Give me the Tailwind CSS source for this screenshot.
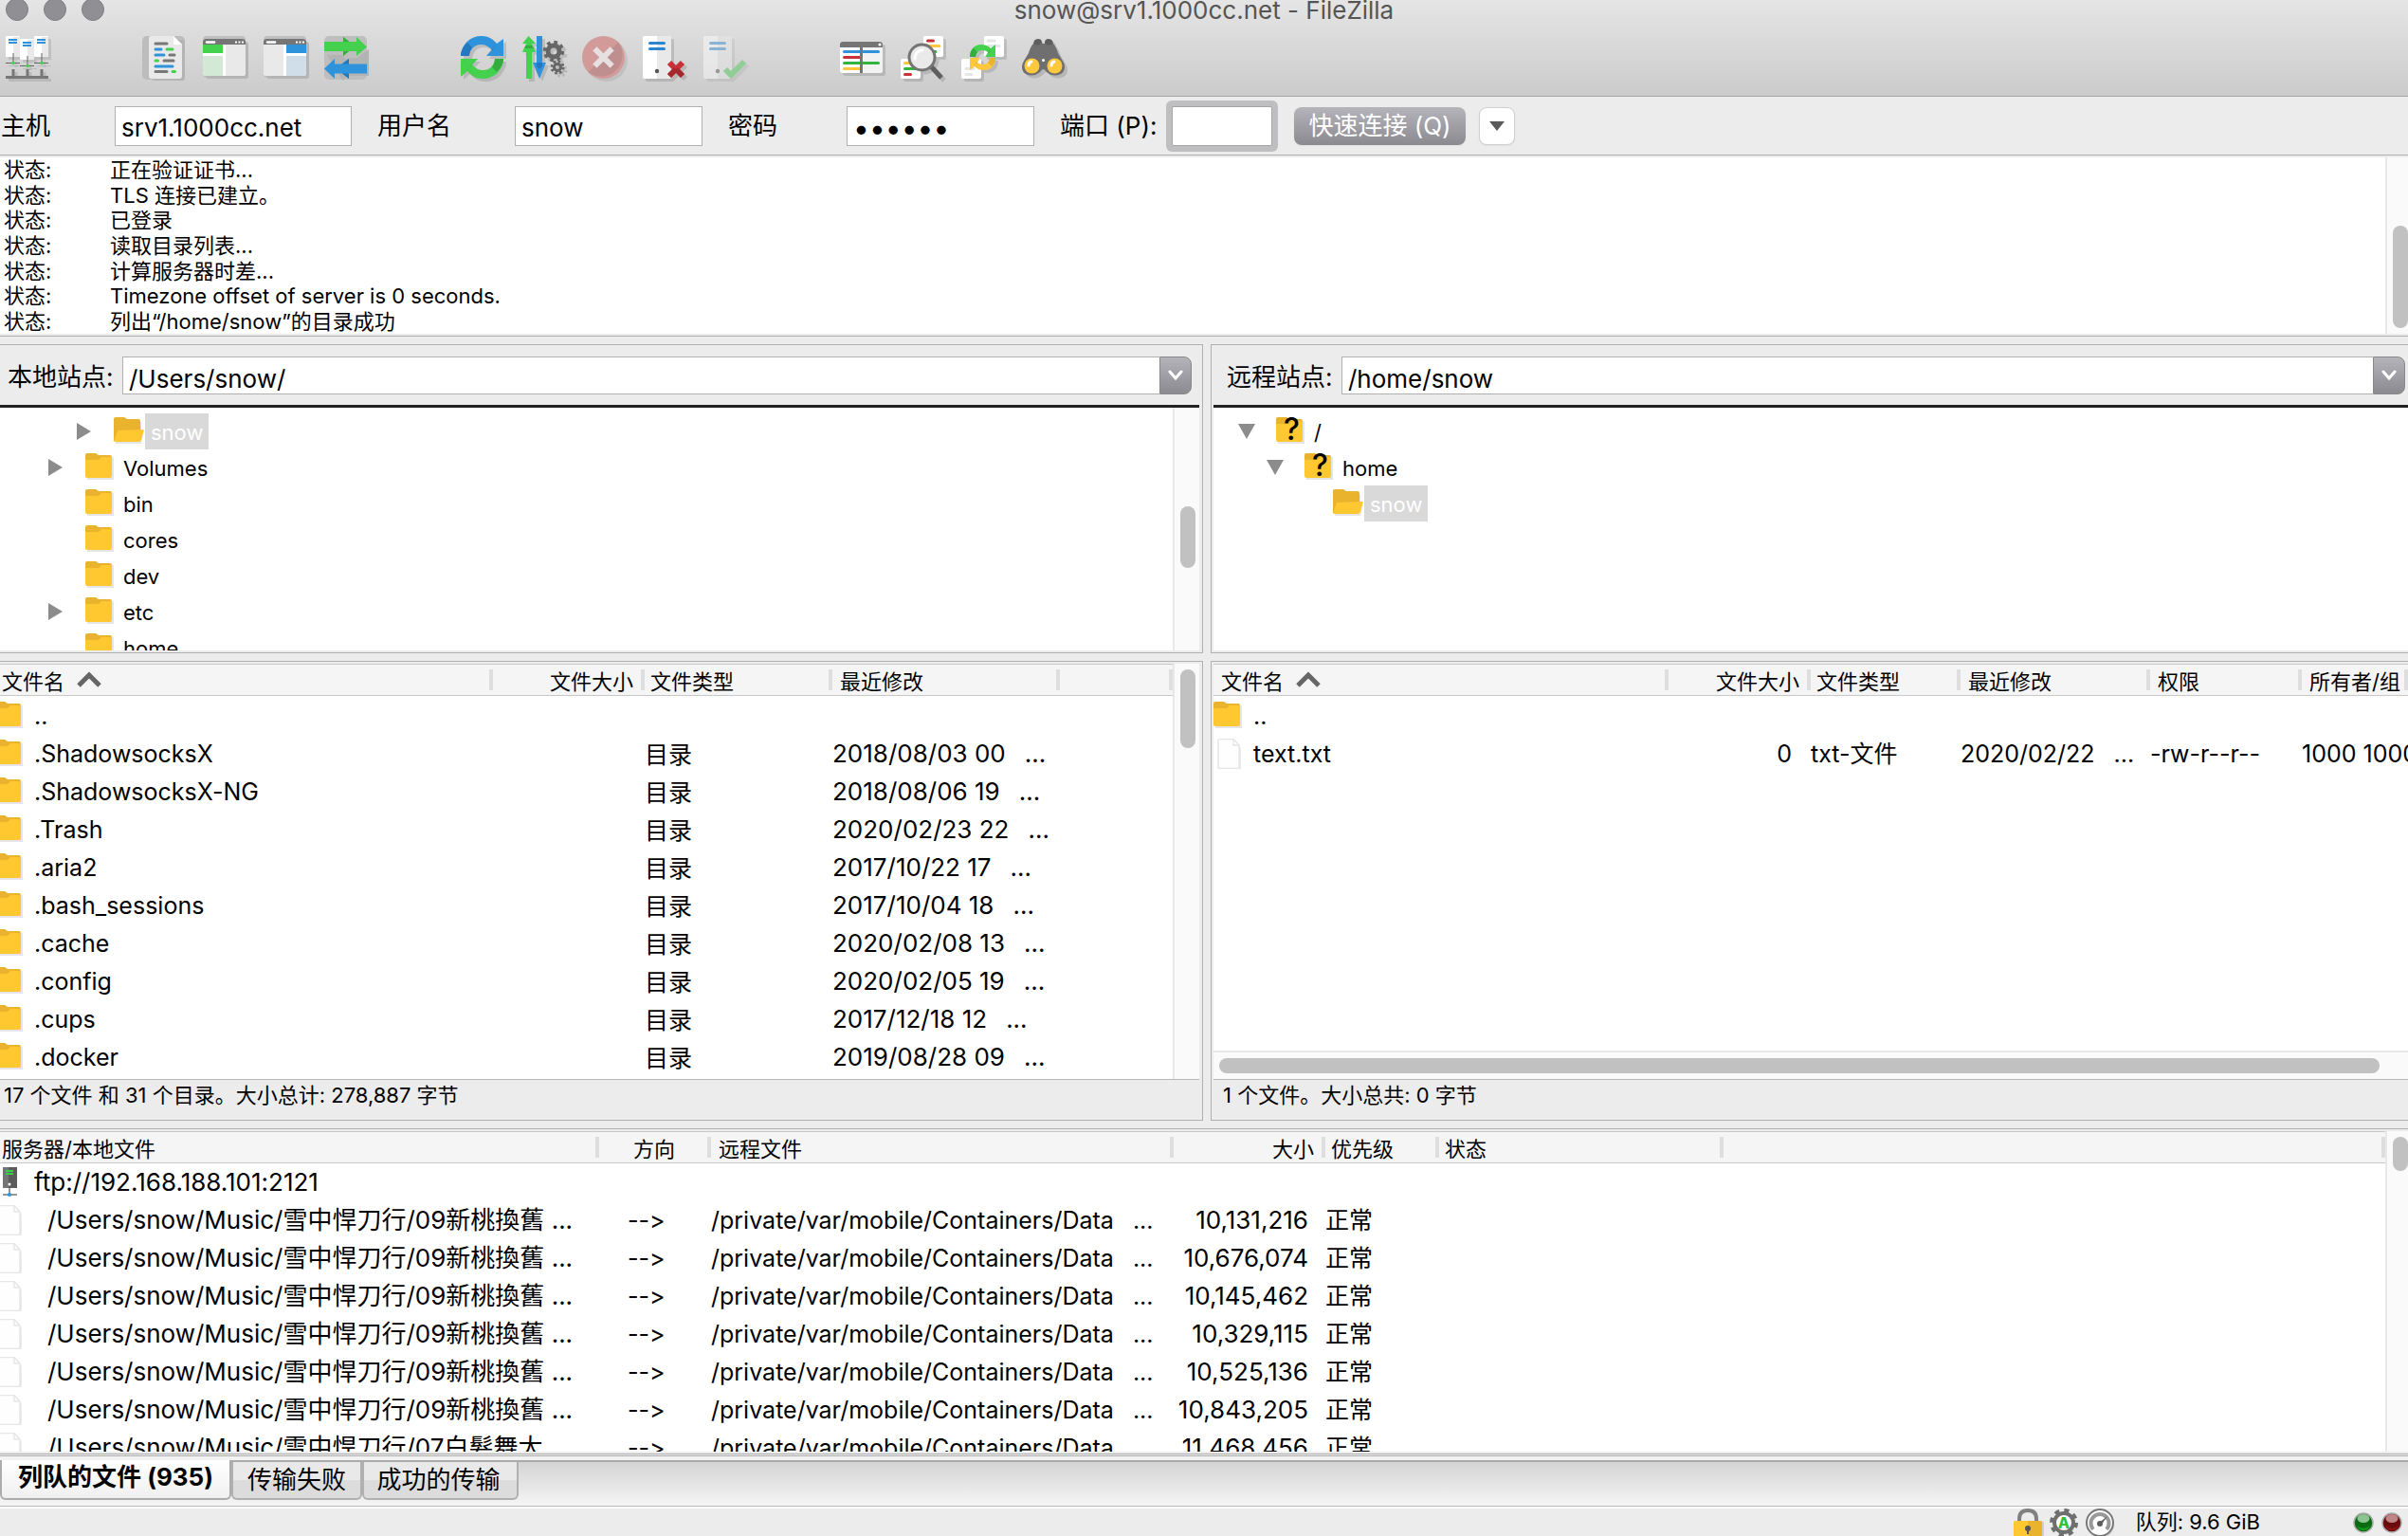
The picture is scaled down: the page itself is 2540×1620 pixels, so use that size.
<!DOCTYPE html>
<html lang="zh-CN">
<head>
    <meta charset="UTF-8" />
    <meta name="viewport" content="width=device-width, initial-scale=1.0" />
    <title>snow@srv1.1000cc.net - FileZilla</title>
    <script src="https://cdn.jsdelivr.net/npm/@tailwindcss/browser@4"></script>
</head>
<body class="flex h-screen flex-col overflow-hidden bg-[#ececec] font-['Inter','Noto_Sans_CJK_SC',sans-serif] [font-feature-settings:'calt'_0] text-[25px] leading-10 whitespace-nowrap text-black">

<!-- Shared icons -->
<svg class="hidden">
    <symbol id="folder" viewBox="0 0 32 32">
        <path d="M1 5h28l1 1v23H2z" fill="#000" opacity=".1"/>
        <path d="M0 3q0-2 2-2h9l3 2h12q2 0 2 2v18H0z" fill="#e9b32d"/>
        <path d="M0 8h14l3-3h10q1 0 1 1v19q0 2-2 2H2q-2 0-2-2z" fill="#ffc730"/>
    </symbol>
    <symbol id="folder-open" viewBox="0 0 32 32">
        <path d="M2 6h27v9h3l-3 14H2z" fill="#000" opacity=".1"/>
        <path d="M0 3q0-2 2-2h9l3 2h12q2 0 2 2v21H0z" fill="#e9b32d"/>
        <path d="M4 15l27-1q1 0 0 3l-2 8q-1 2-3 2H1q-1 0 0-3z" fill="#ffc730"/>
    </symbol>
    <symbol id="file" viewBox="0 0 32 32">
        <path d="M8 3h15l6 7v21q0 3-2 3H8z" fill="#000" opacity=".08"/>
        <path d="M5 2q0-1.500 1.500-1.500H21l6 6.500v23q0 1.500-1.500 1.500h-19Q5 31.500 5 30z" fill="#fefefe" stroke="#e6e6e6" stroke-width="1.500"/>
        <path d="M21 1v6h6" fill="none" stroke="#e6e6e6" stroke-width="1.500"/>
    </symbol>
    <symbol id="server" viewBox="0 0 32 32">
        <path d="M9 0h8v22H9z" fill="#757575"/><path d="M15 0h9v22h-9z" fill="#5b5b5b"/>
        <path d="M12 4h8M12 7h8" stroke="#3ad04a" stroke-width="2"/>
        <circle cx="16" cy="18" r="1.500" fill="#fff"/>
        <path d="M16 22v8M9 29h15" stroke="#777" stroke-width="1.500"/>
        <circle cx="16" cy="29" r="2" fill="#2f93e0"/>
    </symbol>
    <symbol id="refresh" viewBox="0 0 48 48">
        <path d="M0 21C1 8 10 0 22 0c7 0 12 3 16 8l7-5v18H27l6-6c-4-5-8-6-12-6-6 0-11 4-12 12z" fill="#2f93db"/>
        <path d="M0 21C0 15 3 11 7 7l5 5c-2 3-3 6-3 9zM27 21l6-6 5-7v0L27 21z" fill="#2478bf"/>
        <path d="M45 24c-1 13-10 21-22 21-7 0-12-3-16-8l-7 6V24h18l-6 6c4 5 8 6 12 6 6 0 11-4 12-12z" fill="#43d14e"/>
        <path d="M45 24c0 6-3 10-7 14l-5-5c2-3 3-6 3-9zM18 24l-6 6-5 6z" fill="#33ad3d"/>
    </symbol>
</svg>

<!-- Title bar and toolbar -->
<header class="border-b border-[#a3a3a3] bg-linear-to-b from-[#e5e5e5] to-[#cbcbcb] pb-[15px]">
    <div class="relative flex h-[38px] justify-center">
        <div class="absolute -top-[2px] left-[6px] flex gap-4">
            <button aria-label="关闭" class="size-6 rounded-full border border-[#7d7d82] bg-[#8f8f94]"></button>
            <button aria-label="最小化" class="size-6 rounded-full border border-[#7d7d82] bg-[#8f8f94]"></button>
            <button aria-label="缩放" class="size-6 rounded-full border border-[#7d7d82] bg-[#8f8f94]"></button>
        </div>
        <h1 class="text-[26px] leading-[22px] text-[#555]">snow@srv1.1000cc.net - FileZilla</h1>
    </div>
    <nav class="flex h-12 gap-24 pl-[6px]">
        <button aria-label="站点管理器"><svg class="size-12 drop-shadow-[3px_3px_0_#0000001a]" viewBox="0 0 48 48">
            <g fill="#fff"><rect width="15" height="22" rx="1"/><rect x="15" y="3" width="15" height="22" rx="1"/><rect x="30" width="15" height="22" rx="1"/></g>
            <path d="M8 1h7v21H8zM23 4h7v21h-7zM38 1h7v21h-7z" fill="#e9e9e9"/>
            <path d="M3 4h9M3 7h9M18 7h9M18 10h9M33 4h9M33 7h9" stroke="#2f93db" stroke-width="2"/>
            <path d="M8 18v10M23 21v10M38 18v10M0 28.500h15M15 31.500h15M30 28.500h15" stroke="#666" stroke-width="1"/>
            <path d="M8 35v8M23 35v8M38 35v8" stroke="#777" stroke-width="3"/><path d="M0 43.500h45" stroke="#777" stroke-width="3"/>
            <g fill="#43d14e"><circle cx="8" cy="28.500" r="1.800"/><circle cx="23" cy="31.500" r="1.800"/><circle cx="38" cy="28.500" r="1.800"/></g>
        </svg></button>
        <div class="flex gap-4">
            <button aria-label="消息日志"><svg class="size-12" viewBox="0 0 48 48">
                <rect width="45" height="46" rx="5" fill="#bcbcbc"/><rect x="10" y="4" width="35" height="43" rx="3" fill="#b4b4b4"/>
                <path d="M7 2q0-2 2-2h24l9 9v33q0 3-3 3H10q-3 0-3-3z" fill="#e9e9e9"/><path d="M33 0l9 9h-9z" fill="#fff"/>
                <g fill="none" stroke-width="3" stroke-linecap="round">
                    <path d="M14 8h12M29 20h5M23 26h10M14 37.500h12" stroke="#777"/>
                    <path d="M14 14h6M14 20h9M14 32h18" stroke="#2f93db"/>
                    <path d="M26 14h6M14 26h2.500M32 37.500h2.500" stroke="#43d14e"/>
                </g>
            </svg></button>
            <button aria-label="本地目录树"><svg class="size-12" viewBox="0 0 48 48">
                <rect width="45" height="44" rx="4" fill="#bfbfbf"/><rect x="3" y="6" width="45" height="39" rx="3" fill="#b5b5b5"/>
                <rect y="3" width="45" height="39" rx="3" fill="#fff"/><path d="M0 9V6q0-3 3-3h39q3 0 3 3v3z" fill="#757575"/>
                <path d="M4 6.500h8" stroke="#fff" stroke-width="2.500" stroke-linecap="round"/><path d="M34 6.500h2M37.500 6.500h2M41 6.500h2" stroke="#fff" stroke-width="2"/>
                <path d="M0 9h21v9H0z" fill="#43d14e"/><path d="M0 21h21v21H3q-3 0-3-3z" fill="#d3e9d5"/><path d="M24 9h21v30q0 3-3 3H24z" fill="#e9e9e9"/>
            </svg></button>
            <button aria-label="远程目录树"><svg class="size-12" viewBox="0 0 48 48">
                <rect width="45" height="44" rx="4" fill="#bfbfbf"/><rect x="3" y="6" width="45" height="39" rx="3" fill="#b5b5b5"/>
                <rect y="3" width="45" height="39" rx="3" fill="#fff"/><path d="M0 9V6q0-3 3-3h39q3 0 3 3v3z" fill="#757575"/>
                <path d="M4 6.500h8" stroke="#fff" stroke-width="2.500" stroke-linecap="round"/><path d="M34 6.500h2M37.500 6.500h2M41 6.500h2" stroke="#fff" stroke-width="2"/>
                <path d="M24 9h21v9H24z" fill="#2f93db"/><path d="M24 21h21v18q0 3-3 3H24z" fill="#d0dee9"/><path d="M0 9h21v33H3q-3 0-3-3z" fill="#e9e9e9"/>
            </svg></button>
            <button aria-label="传输队列"><svg class="size-12" viewBox="0 0 48 48">
                <rect width="45" height="46" rx="5" fill="#bebebe"/><path d="M3 20h16l3 4 13-1 12-9v28H24l-4 5-3-4z" fill="#b3b3b3"/>
                <path d="M0 6h20V1l7 5h7V1l11 10.500L34 21v-5h-8l-6 5v-5H0z" fill="#43d14e"/><path d="M20 1l6 5h-6zM20 21v-5h6z" fill="#33ad3d"/>
                <path d="M45 29.500H26V24l-8 5.500h-7V24L0 34.500 11 45v-5.500h8l7 5.500v-5.500h19z" fill="#2f93db"/><path d="M26 24v5.500h-7zM26 45v-5.500h-7z" fill="#2478bf"/>
            </svg></button>
        </div>
        <div class="flex gap-4">
            <button aria-label="刷新"><svg class="size-12 drop-shadow-[3px_3px_0_#0000001f]" viewBox="0 0 48 48"><use href="#refresh"/></svg></button>
            <button aria-label="处理队列"><svg class="size-12 drop-shadow-[3px_3px_0_#0000001f]" viewBox="0 0 48 48">
                <path d="M7.500 0L15 8h-4l4 9h-4v28H5V17H1l4-9H1z" fill="#43d14e"/><path d="M5 10h6l2 3H3z" fill="#33ad3d"/>
                <path d="M16 0h6v28h4l-7 17-7-17h4z" fill="#2f93db"/><path d="M16 28h6v4l-3 3-3-3z" fill="#2478bf"/>
                <g fill="none" stroke="#666"><circle cx="34" cy="16" r="6" stroke-width="5"/><circle cx="34" cy="16" r="9.500" stroke-width="3.500" stroke-dasharray="3.730 3.730"/>
                <circle cx="38" cy="33" r="3.500" stroke-width="3"/><circle cx="38" cy="33" r="6" stroke-width="3" stroke-dasharray="2.350 2.350"/></g>
            </svg></button>
            <button aria-label="取消当前操作" disabled><svg class="size-12 drop-shadow-[3px_3px_0_#00000014]" viewBox="0 0 48 48">
                <circle cx="22.500" cy="22.500" r="22.500" fill="#d39a9a"/><path d="M38 6.500A22.500 22.500 0 0 1 6.500 38z" fill="#bf8f8f"/>
                <path d="M15.500 15.500l14 14M29.500 15.500l-14 14" stroke="#e6e0e0" stroke-width="6" stroke-linecap="square"/>
            </svg></button>
            <button aria-label="断开连接"><svg class="size-12 drop-shadow-[3px_3px_0_#0000001f]" viewBox="0 0 48 48">
                <rect width="30" height="45" rx="2" fill="#fff"/><path d="M15 0h13q2 0 2 2v41q0 2-2 2H15z" fill="#e9e9e9"/>
                <path d="M7.500 7.500h15M7.500 13.500h15" stroke="#2a86cf" stroke-width="3" stroke-linecap="round"/><circle cx="15" cy="37" r="2.200" fill="#555"/>
                <path d="M28 28l14 14M42 28L28 42" stroke="#c63238" stroke-width="6"/><path d="M35 35l7 7M35 35l-7 7" stroke="#a3272c" stroke-width="5"/>
            </svg></button>
            <button aria-label="重新连接" disabled><svg class="size-12 opacity-45 drop-shadow-[3px_3px_0_#0000001f]" viewBox="0 0 48 48">
                <rect width="30" height="45" rx="2" fill="#fff"/><path d="M15 0h13q2 0 2 2v41q0 2-2 2H15z" fill="#e9e9e9"/>
                <path d="M7.500 7.500h15M7.500 13.500h15" stroke="#2a86cf" stroke-width="3" stroke-linecap="round"/><circle cx="15" cy="37" r="2.200" fill="#555"/>
                <path d="M23 35l6 6 14-14" fill="none" stroke="#43c950" stroke-width="6"/>
            </svg></button>
        </div>
        <div class="flex gap-4">
            <button aria-label="目录列表过滤器"><svg class="size-12 drop-shadow-[3px_3px_0_#0000001f]" viewBox="0 0 48 48">
                <rect y="6" width="45" height="33" rx="3" fill="#fff"/><path d="M25 12h20v24q0 3-3 3H25z" fill="#f2f2f2"/>
                <path d="M0 12V9q0-3 3-3h39q3 0 3 3v3z" fill="#757575"/><circle cx="42" cy="9" r="1.500" fill="#fff"/>
                <g stroke-width="3" stroke-linecap="round"><path d="M4.500 16.500h36" stroke="#2f93db"/><path d="M4.500 22.500h18" stroke="#c63238"/><path d="M4.500 28.500h36" stroke="#32b53e"/><path d="M4.500 34.500h18" stroke="#ffc73c"/></g>
                <path d="M22.500 12v27" stroke="#757575" stroke-width="3"/>
            </svg></button>
            <button aria-label="目录对比"><svg class="size-12 drop-shadow-[3px_3px_0_#0000001f]" viewBox="0 0 48 48">
                <rect x="24" width="21" height="22" rx="2" fill="#fff"/><rect y="24" width="21" height="21" rx="2" fill="#fff"/>
                <g stroke-width="3" stroke-linecap="round"><path d="M28.500 5h6M4.500 40.500h6" stroke="#c63238"/><path d="M28 10.500h13M4.500 28.500h8" stroke="#ffc73c"/><path d="M30 16.500h7M4.500 34.500h12" stroke="#32b53e"/></g>
                <path d="M32 32l11 12" stroke="#5e5e5e" stroke-width="5"/><circle cx="22.500" cy="22.500" r="13.500" fill="#eaeaea" stroke="#757575" stroke-width="3"/>
                <path d="M15 24q0-8 8-9" fill="none" stroke="#fff" stroke-width="3" stroke-linecap="round"/>
            </svg></button>
            <button aria-label="同步浏览"><svg class="size-12 drop-shadow-[3px_3px_0_#0000001f]" viewBox="0 0 48 48">
                <rect x="24" width="21" height="22" rx="2" fill="#fff"/><rect y="24" width="21" height="21" rx="2" fill="#fff"/>
                <path d="M28 5h7M28 10.500h12M5 34.500h8M5 40.500h6" stroke="#e6e6e6" stroke-width="3" stroke-linecap="round"/>
                <path d="M9 22C9 14 14 9 21 9c4 0 7 1 10 4l5-4v13H25l4-4c-2-2-4-3-7-3-4 0-7 3-7 7z" fill="#43d14e"/><path d="M9 22q0-6 4-9l4 4q-2 2-2 5zM25 22l4-4 2-5z" fill="#33ad3d"/>
                <path d="M36 23c0 8-5 13-12 13-4 0-7-1-10-4l-5 4V23h11l-4 4c2 2 4 3 7 3 4 0 7-3 7-7z" fill="#ffc73c"/><path d="M36 23q0 6-4 9l-4-4q2-2 2-5zM20 23l-4 4-2 5z" fill="#e9b32d"/>
            </svg></button>
            <button aria-label="文件搜索"><svg class="size-12 drop-shadow-[3px_3px_0_#0000001f]" viewBox="0 0 48 48">
                <path d="M12 9q0-6 5-6 4 0 4 4v5h-9zM24 12V7q0-4 4-4 5 0 5 6v3z" fill="#5e5e5e"/>
                <path d="M12 8q6 3 8 0h5q2 3 8 0 3 3 5 10l6 10q3 8-3 12-8 4-15-2-2-3-3.500-3T19 38q-7 6-15 2-6-4-3-12L7 18q2-7 5-10z" fill="#6f6f6f"/>
                <circle cx="10.500" cy="31.500" r="8" fill="#ffc73c"/><circle cx="34.500" cy="31.500" r="8" fill="#ffc73c"/><circle cx="22.500" cy="25.500" r="1.500" fill="#fff"/>
                <path d="M7 31q0-3 3-4M31 31q0-3 3-4" fill="none" stroke="#fff" stroke-width="3" stroke-linecap="round"/>
            </svg></button>
        </div>
    </nav>
</header>

<!-- Quick connect -->
<form class="flex h-[62px] items-center border-b border-[#b0b0b0] pl-px text-[26px]">
    <label for="host" class="w-[120px]">主机</label>
    <input id="host" value="srv1.1000cc.net" class="h-[42px] w-[250px] border border-[#b0b0b0] bg-white pt-1 pl-[6px] outline-none" />
    <label for="user" class="w-[172px] pl-[27px]">用户名</label>
    <input id="user" value="snow" class="h-[42px] w-[198px] border border-[#b0b0b0] bg-white pt-1 pl-[6px] outline-none" />
    <label for="pass" class="w-[152px] pl-[27px]">密码</label>
    <input id="pass" type="password" value="secret" class="h-[42px] w-[198px] border border-[#b0b0b0] bg-white pt-1 pl-[6px] text-3xl outline-none" />
    <label for="port" class="w-[145px] pl-[27px]">端口 (P):</label>
    <input id="port" class="h-[42px] w-[106px] rounded-xs border border-[#a5a5a7] bg-white pl-[6px] ring-6 ring-[#bfbfc1] outline-none" />
    <button type="button" class="ml-[23px] h-10 w-[181px] rounded-lg bg-linear-to-b from-[#b5b4ba] to-[#8b8a90] text-white shadow-xs">快速连接 (Q)</button>
    <button type="button" aria-label="历史记录" class="ml-[14px] flex h-10 w-[38px] items-center justify-center rounded-lg border border-[#cfcfcf] bg-white shadow-xs"><svg class="h-[10px] w-4" viewBox="0 0 16 10"><path d="M0 0h16L8 10z" fill="#5a5a5a"/></svg></button>
</form>

<!-- Message log -->
<section class="flex border-b border-[#b0b0b0] py-[2px]">
    <ul id="log" class="grid h-[186px] flex-1 grid-rows-7 bg-white pl-1 text-[22px]"></ul>
    <div class="w-6 border-l-2 border-[#e8e8e8] bg-[#fafafa] pt-[72px] pl-[6px]"><div class="h-[108px] w-4 rounded-full bg-[#c1c1c1]"></div></div>
</section>

<main class="mt-2 grid grid-cols-[1269fr_1263fr] gap-2">
    <!-- Local tree -->
    <section class="min-w-0 border-y border-r border-[#b0b0b0] pr-[3px] pb-[2px]">
        <div class="flex h-[63px] items-center pr-2 pb-[11px] pl-2 text-[26px]">
            <label for="localPath" class="w-[121px] pt-4">本地站点:</label>
            <input id="localPath" value="/Users/snow/" class="mt-3 h-10 min-w-0 flex-1 border border-r-0 border-[#b0b0b0] bg-white pt-2 pl-[6px] outline-none" />
            <button aria-label="本地路径列表" class="mt-3 flex h-10 w-[34px] items-center justify-center rounded-r-lg border border-[#89888e] bg-linear-to-b from-[#b5b4ba] to-[#8b8a90]"><svg class="h-3 w-4" viewBox="0 0 16 12"><path d="M2 2l6 7 6-7" fill="none" stroke="#fff" stroke-width="3" stroke-linecap="round"/></svg></button>
        </div>
        <div class="border-t-3 border-[#222]"></div>
        <div class="flex h-64 bg-white">
            <ul id="localTree" class="flex-1 overflow-hidden pt-[6px] text-[22px]"></ul>
            <div class="w-7 border-l-2 border-[#e8e8e8] bg-[#fafafa] pt-[104px] pl-[6px]"><div class="h-[65px] w-4 rounded-full bg-[#c1c1c1]"></div></div>
        </div>
    </section>

    <!-- Remote tree -->
    <section class="min-w-0 border-y border-l border-[#b0b0b0] pb-[2px] pl-[2px]">
        <div class="flex h-[63px] items-center pr-[3px] pb-[11px] pl-[14px] text-[26px]">
            <label for="remotePath" class="w-[121px] pt-4">远程站点:</label>
            <input id="remotePath" value="/home/snow" class="mt-3 h-10 min-w-0 flex-1 border border-r-0 border-[#b0b0b0] bg-white pt-2 pl-[6px] outline-none" />
            <button aria-label="远程路径列表" class="mt-3 flex h-10 w-[34px] items-center justify-center rounded-r-lg border border-[#89888e] bg-linear-to-b from-[#b5b4ba] to-[#8b8a90]"><svg class="h-3 w-4" viewBox="0 0 16 12"><path d="M2 2l6 7 6-7" fill="none" stroke="#fff" stroke-width="3" stroke-linecap="round"/></svg></button>
        </div>
        <div class="border-t-3 border-[#222]"></div>
        <ul id="remoteTree" class="h-64 overflow-hidden bg-white pt-[6px] text-[22px]"></ul>
    </section>

    <!-- Local files -->
    <section class="min-w-0 border-y border-r border-[#b0b0b0] pt-[2px] pr-[3px]">
        <div class="flex h-[438px] bg-white">
            <div class="min-w-0 flex-1 overflow-hidden">
                <table class="w-full table-fixed border-collapse">
                    <colgroup><col class="w-[520px]" /><col class="w-[160px]" /><col class="w-[198px]" /><col class="w-[240px]" /><col /></colgroup>
                    <thead id="localHead" class="border-y border-[#c8c8c8] bg-[#f5f5f5] text-[22px]"></thead>
                    <tbody id="localFiles"></tbody>
                </table>
            </div>
            <div class="w-7 border-l-2 border-[#e8e8e8] bg-[#fafafa] pt-[6px] pl-[6px]"><div class="h-[83px] w-4 rounded-full bg-[#c1c1c1]"></div></div>
        </div>
        <p class="h-[43px] border-t border-[#b8b8b8] pl-1 text-[22px] leading-8">17 个文件 和 31 个目录。大小总计: 278,887 字节</p>
    </section>

    <!-- Remote files -->
    <section class="min-w-0 border-y border-l border-[#b0b0b0] pt-[2px] pl-[2px]">
        <div class="flex h-[438px] flex-col bg-white">
            <div class="min-h-0 flex-1 overflow-hidden">
                <table class="w-full table-fixed border-collapse">
                    <colgroup><col class="w-[480px]" /><col class="w-[150px]" /><col class="w-[158px]" /><col class="w-[200px]" /><col class="w-[160px]" /><col /></colgroup>
                    <thead id="remoteHead" class="border-y border-[#c8c8c8] bg-[#f5f5f5] text-[22px]"></thead>
                    <tbody id="remoteFiles"></tbody>
                </table>
            </div>
            <div class="h-[30px] border-t-2 border-[#e8e8e8] bg-[#fafafa] pt-[6px] pr-[30px] pl-[6px]"><div class="h-4 rounded-full bg-[#c1c1c1]"></div></div>
        </div>
        <p class="h-[43px] border-t border-[#b8b8b8] pl-[10px] text-[22px] leading-8">1 个文件。大小总共: 0 字节</p>
    </section>
</main>

<!-- Transfer queue -->
<section class="mt-2 flex min-h-0 flex-1 border-y border-[#b0b0b0] py-[2px]">
    <div class="min-w-0 flex-1 overflow-hidden bg-white">
        <table class="w-full table-fixed border-collapse">
            <colgroup><col class="w-[632px]" /><col class="w-[118px]" /><col class="w-[488px]" /><col class="w-[160px]" /><col class="w-[120px]" /><col class="w-[300px]" /><col /></colgroup>
            <thead id="queueHead" class="border-y border-[#c8c8c8] bg-[#f5f5f5] text-[22px]"></thead>
            <tbody id="queue"></tbody>
        </table>
    </div>
    <div class="w-6 border-l-2 border-[#e8e8e8] bg-[#fafafa] pt-[6px] pl-[6px]"><div class="h-9 w-4 rounded-full bg-[#c1c1c1]"></div></div>
</section>

<div class="mt-px h-[5px] border-t border-[#b0b0b0] bg-[#f2f2f2]"></div>
<div class="flex h-[49px] items-start border-t-2 border-b border-t-[#aaa] border-b-[#b8b8b8] bg-linear-to-b from-[#d4d4d4] to-[#f5f5f5] text-[26px]">
    <button class="-mt-[2px] h-[42px] w-[244px] rounded-b-md border-2 border-t-0 border-[#acacac] bg-linear-to-b from-white to-[#f0f0f0] pb-1 leading-8 font-bold">列队的文件 (935)</button>
    <button class="h-10 w-[138px] rounded-b-md border-2 border-t-0 border-[#b0b0b0] bg-linear-to-b from-[#e9e9e9] from-50% to-[#dcdcdc] to-50% leading-9">传输失败</button>
    <button class="h-10 w-[165px] rounded-b-md border-2 border-t-0 border-[#b0b0b0] bg-linear-to-b from-[#e9e9e9] from-50% to-[#dcdcdc] to-50% pr-1 leading-9">成功的传输</button>
</div>

<!-- Status bar -->
<footer class="flex h-[31px] items-start justify-end overflow-hidden border-t-2 border-white pr-[6px] text-[22px]">
    <svg class="h-8 w-[34px]" viewBox="0 0 34 32"><path d="M7 14v-3q0-9 9-9t9 9v3" fill="none" stroke="#808080" stroke-width="4"/><path d="M4 14h29v18H4z" fill="#000" opacity=".12"/><path d="M1 15q0-2 2-2h26q2 0 2 2v17H1z" fill="#ffc730"/><path d="M16 13h13q2 0 2 2v17H16z" fill="#e9b32d"/><circle cx="16" cy="21" r="3" fill="#555"/><path d="M15 21h2v6h-2z" fill="#555"/></svg>
    <svg class="ml-1 size-8" viewBox="0 0 32 32"><circle cx="16" cy="15" r="10" fill="#fff" stroke="#6f6f6f" stroke-width="4"/><circle cx="16" cy="15" r="13" fill="none" stroke="#6f6f6f" stroke-width="4" stroke-dasharray="5.100 5.100"/><text x="16" y="21" text-anchor="middle" font-size="16" font-weight="800" fill="#32c03f">A</text></svg>
    <svg class="ml-[6px] size-8" viewBox="0 0 32 32"><circle cx="17" cy="17" r="14" fill="#000" opacity=".12"/><circle cx="16" cy="15" r="14" fill="#fff" stroke="#777" stroke-width="2"/><path d="M9 22a9.500 9.500 0 1 1 14 0" fill="none" stroke="#999" stroke-width="4"/><path d="M14 16l10-8-7 10z" fill="#5e5e5e"/><circle cx="16" cy="16" r="3" fill="#5e5e5e"/></svg>
    <span class="mr-[98px] ml-[22px] leading-7">队列: 9.6 GiB</span>
    <svg class="mt-1 size-[22px]" viewBox="0 0 22 22"><circle cx="11" cy="11" r="10" fill="#0b6b12" stroke="#aaa" stroke-width="1.500"/><ellipse cx="11" cy="6.500" rx="6.500" ry="4.500" fill="#8cc48f"/><path d="M4 14q7 6 14 0-2 5-7 5t-7-5z" fill="#159a1e"/></svg>
    <svg class="mt-1 ml-2 size-[22px]" viewBox="0 0 22 22"><circle cx="11" cy="11" r="10" fill="#6b0b0b" stroke="#aaa" stroke-width="1.500"/><ellipse cx="11" cy="6.500" rx="6.500" ry="4.500" fill="#bd8585"/><path d="M4 14q7 6 14 0-2 5-7 5t-7-5z" fill="#8f1515"/></svg>
</footer>

<script>
    const log = ["正在验证证书...", "TLS 连接已建立。", "已登录", "读取目录列表...", "计算服务器时差...", "Timezone offset of server is 0 seconds.", "列出“/home/snow”的目录成功"];
    document.getElementById("log").innerHTML = log.map(m => `
      <li class="flex items-center leading-6"><span class="w-28">状态:</span>${m}</li>
    `).join("");

    // Tree rows: indent class, arrow, icon, name, selected
    const right = `<svg class="mr-6 h-[18px] w-[15px]" viewBox="0 0 15 18"><path d="M0 0l15 9-15 9z" fill="#8c8c8c"/></svg>`;
    const down = `<svg class="mr-[22px] h-4 w-[18px]" viewBox="0 0 18 16"><path d="M0 0h18L9 16z" fill="#8c8c8c"/></svg>`;
    const mark = `<span class="absolute top-0 left-2 text-[32px] leading-7 font-medium">?</span>`;

    function treeRow(indent, arrow, icon, name, extra) {
      const box = extra === "selected"
        ? `<span class="ml-px bg-[#d9d9d9] px-[6px] pt-[2px] leading-9 text-white">${name}</span>`
        : `<span class="ml-2 pt-[2px] leading-9">${name}</span>`;
      return `<li class="flex h-[38px] items-center ${indent}">${arrow}<span class="relative size-8"><svg class="size-8"><use href="#${icon}"/></svg>${extra === "unknown" ? mark : ""}</span>${box}</li>`;
    }

    document.getElementById("localTree").innerHTML =
      treeRow("pl-[81px]", right, "folder-open", "snow", "selected") +
      treeRow("pl-[51px]", right, "folder", "Volumes") +
      treeRow("pl-[90px]", "", "folder", "bin") +
      treeRow("pl-[90px]", "", "folder", "cores") +
      treeRow("pl-[90px]", "", "folder", "dev") +
      treeRow("pl-[51px]", right, "folder", "etc") +
      treeRow("pl-[90px]", "", "folder", "home");

    document.getElementById("remoteTree").innerHTML =
      treeRow("pl-[26px]", down, "folder", "/", "unknown") +
      treeRow("pl-[56px]", down, "folder", "home", "unknown") +
      treeRow("pl-[126px]", "", "folder-open", "snow", "selected");

    // Column headers: [title, padding/alignment, sorted]
    const caret = `<svg class="ml-3 h-[18px] w-7" viewBox="0 0 28 18"><path d="M3 15L14 4l11 11" fill="none" stroke="#666" stroke-width="5"/></svg>`;
    function head(id, cols) {
      document.getElementById(id).innerHTML = "<tr>" + cols.map(([title, cls, sorted]) => `
        <th scope="col" class="p-0 font-normal"><div class="flex h-8 items-center"><span class="flex flex-1 items-center leading-7 ${cls}"><span class="pt-1">${title}</span>${sorted ? caret : ""}</span><i class="h-[22px] w-1 bg-[#dedede]"></i></div></th>
      `).join("") + "</tr>";
    }
    head("localHead", [["文件名", "pl-[2px]", true], ["文件大小", "justify-end pr-2"], ["文件类型", "pl-[6px]"], ["最近修改", "pl-2"], ["", ""]]);
    head("remoteHead", [["文件名", "pl-2", true], ["文件大小", "justify-end pr-2"], ["文件类型", "pl-[6px]"], ["最近修改", "pl-2"], ["权限", "pl-2"], ["所有者/组", "pl-2"]]);
    head("queueHead", [["服务器/本地文件", "pl-[2px]"], ["方向", "pl-9"], ["远程文件", "pl-2"], ["大小", "justify-end pr-2"], ["优先级", "pl-[6px]"], ["状态", "pl-[6px]"], ["", ""]]);

    const files = [
      [".ShadowsocksX", "2018/08/03 00"], [".ShadowsocksX-NG", "2018/08/06 19"], [".Trash", "2020/02/23 22"],
      [".aria2", "2017/10/22 17"], [".bash_sessions", "2017/10/04 18"], [".cache", "2020/02/08 13"],
      [".config", "2020/02/05 19"], [".cups", "2017/12/18 12"], [".docker", "2019/08/28 09"]
    ];
    document.getElementById("localFiles").innerHTML = [["..", ""], ...files].map(([name, date]) => `
      <tr class="leading-9">
        <td class="p-0"><div class="flex h-10 items-center pt-[2px]"><svg class="-ml-[6px] size-8"><use href="#folder"/></svg><span class="pl-[10px]">${name}</span></div></td>
        <td class="p-0"></td>
        <td class="p-0 pt-1">${date ? "目录" : ""}</td>
        <td class="p-0 pt-[2px] text-[26px]">${date ? `${date}<span class="pl-5">...</span>` : ""}</td>
        <td class="p-0"></td>
      </tr>
    `).join("");

    document.getElementById("remoteFiles").innerHTML = `
      <tr class="leading-9"><td class="p-0" colspan="6"><div class="flex h-10 items-center pt-[2px]"><svg class="size-8"><use href="#folder"/></svg><span class="pl-[10px]">..</span></div></td></tr>
      <tr class="leading-9">
        <td class="p-0"><div class="flex h-10 items-center pt-[2px]"><svg class="size-8 overflow-visible"><use href="#file"/></svg><span class="pl-[10px]">text.txt</span></div></td>
        <td class="p-0 pt-[2px] pr-5 text-right">0</td>
        <td class="p-0 pt-[2px]">txt-文件</td>
        <td class="p-0 pt-[2px]">2020/02/22<span class="pl-5">...</span></td>
        <td class="p-0 pt-[2px]">-rw-r--r--</td>
        <td class="p-0 pt-[2px]">1000 1000</td>
      </tr>`;

    const sizes = ["10,131,216", "10,676,074", "10,145,462", "10,329,115", "10,525,136", "10,843,205", "11,468,456"];
    document.getElementById("queue").innerHTML = `
      <tr><td class="p-0" colspan="7"><div class="flex h-10 items-center text-[26px]"><svg class="-ml-[6px] size-8"><use href="#server"/></svg><span class="pl-[10px]">ftp://192.168.188.101:2121</span></div></td></tr>
    ` + sizes.map((size, i) => `
      <tr>
        <td class="p-0"><div class="flex h-10 items-center text-[26px]"><svg class="-ml-[6px] size-8"><use href="#file"/></svg><span class="pl-6">/Users/snow/Music/雪中悍刀行/${i < 6 ? "09新桃換舊 ..." : "07白髮舞太"}</span></div></td>
        <td class="p-0 pl-[30px]">--&gt;</td>
        <td class="p-0">/private/var/mobile/Containers/Data${i < 6 ? `<span class="pl-5">...</span>` : ""}</td>
        <td class="p-0 pr-[18px] text-right text-[26px]">${size}</td>
        <td class="p-0">正常</td>
        <td class="p-0"></td>
        <td class="p-0"></td>
      </tr>
    `).join("");
</script>

</body>
</html>
